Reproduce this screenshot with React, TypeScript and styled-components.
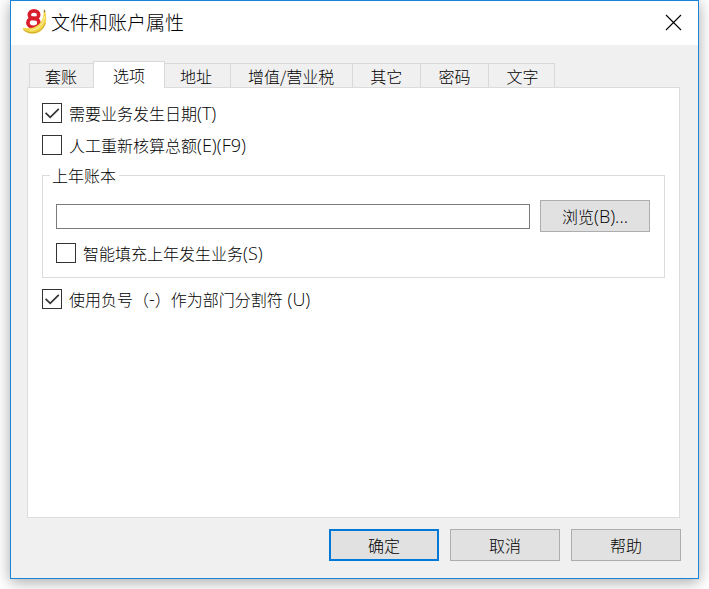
import React, { useState } from "react";
import styled, { createGlobalStyle } from "styled-components";

const GlobalStyle = createGlobalStyle`
  *, *::before, *::after { box-sizing: border-box; }
  body {
    margin: 0;
    background: #fff;
    color: #000;
    font: 300 16px/20px "Noto Sans CJK SC", "Noto Sans", sans-serif;
  }
  button, input { font: inherit; color: inherit; }
`;

const Dialog = styled.main`
  display: flex;
  flex-direction: column;
  min-height: calc(100vh - 10px);
  margin: 0 10px 10px;
  border: 1px solid #1883d7;
  background: #f0f0f0;
  box-shadow: 0 3px 14px rgba(0, 0, 0, 0.35);
`;

const TitleBar = styled.header`
  display: flex;
  align-items: center;
  gap: 4px;
  height: 44px;
  padding: 0 16px 2px 11px;
  background: #fff;
`;

const Title = styled.h1`
  flex: 1;
  margin: 0;
  font-size: 19px;
  font-weight: 300;
  line-height: 24px;
`;

const CloseButton = styled.button`
  display: flex;
  padding: 0;
  border: 0;
  background: none;
`;

const Content = styled.div`
  display: flex;
  flex: 1;
  flex-direction: column;
  padding: 16px 18px 0 16px;
`;

const TabList = styled.div`
  display: flex;
  align-items: flex-end;
  padding-left: 2px;
`;

const Tab = styled.button<{ $selected: boolean }>`
  height: ${(p) => (p.$selected ? 27 : 24)}px;
  margin: ${(p) => (p.$selected ? "0 -2px -1px" : "0")};
  padding: ${(p) => (p.$selected ? "0 19px" : "1px 18px 0 17px")};
  border: solid #d9d9d9;
  border-width: ${(p) => (p.$selected ? "1px 1px 0" : "1px 1px 0 0")};
  background: ${(p) => (p.$selected ? "#fff" : "#f0f0f0")};
  white-space: nowrap;
  z-index: ${(p) => (p.$selected ? 1 : 0)};

  &:first-child {
    margin-left: 0;
    padding-right: 17px;
    padding-left: 15px;
    border-left-width: 1px;
  }

  &:last-child {
    padding-right: 16px;
  }
`;

const Panel = styled.section`
  flex: 1;
  padding: 15px 14px;
  border: 1px solid #dcdcdc;
  background: #fff;
`;

const CheckLabel = styled.label`
  display: flex;
  align-items: center;
  gap: 7px;

  & + & {
    margin-top: 12px;
  }
`;

const CheckBox = styled.span`
  display: grid;
  flex: none;

  & > * {
    grid-area: 1 / 1;
    width: 20px;
    height: 20px;
  }

  input {
    appearance: none;
    margin: 0;
    border: 1px solid #333;
    background: #fff;
  }

  svg {
    visibility: hidden;
    pointer-events: none;
  }

  input:checked + svg {
    visibility: visible;
  }
`;

const Latin = styled.span`
  font-family: "Open Sans", sans-serif;
  font-size: 18px;
  font-weight: 300;
  line-height: 0;
`;

const Group = styled.fieldset`
  min-width: 0;
  margin: 11px 0;
  padding: 15px 0 14px;
  border: 1px solid #dcdcdc;
`;

const GroupTitle = styled.legend`
  margin-left: 7px;
  padding: 0 3px 0 2px;
  line-height: 18px;
`;

const GroupBody = styled.div`
  display: flex;
  flex-direction: column;
  gap: 11px;
  padding: 1px 14px 0 13px;
`;

const FileRow = styled.div`
  display: flex;
  align-items: center;
  gap: 10px;
`;

const PathInput = styled.input`
  flex: 1;
  min-width: 0;
  height: 25px;
  padding: 0 4px;
  border: 1px solid #7a7a7a;
  background: #fff;
`;

const PushButton = styled.button<{ $primary?: boolean }>`
  width: 110px;
  height: 32px;
  padding: 0;
  border: ${(p) => (p.$primary ? "2px solid #0078d7" : "1px solid #adadad")};
  background: #e1e1e1;
`;

const Footer = styled.footer`
  display: flex;
  justify-content: flex-end;
  gap: 11px;
  padding: 11px 17px 17px;
`;

function Logo() {
  return (
    <svg width="25" height="26" viewBox="0 0 25 26" aria-hidden="true">
      <g fill="none" stroke="#d81e2c" strokeWidth="3.7">
        <ellipse cx="12" cy="5.8" rx="4.7" ry="3.9" />
        <ellipse cx="11.4" cy="13.7" rx="5.5" ry="4.6" />
      </g>
      <path
        d="M21.6 1.2L23 .8C23.2 3 24.4 6 24.2 10.5C23.8 18.5 18.5 24.8 10.5 24.8C6.5 24.8 3 23 .8 20.3L1.2 18.8C9 20.5 18 17.5 20.6 9.5C21.6 6.5 22 4 21.6 1.2Z"
        fill="#f1d549"
      />
      <path d="M22.4 7C22 14.5 16.5 20.5 8 21.2" fill="none" stroke="#f9ea8c" strokeWidth="1.4" />
      <path d="M1.5 20.8C8 26 20 24.5 23.4 14" fill="none" stroke="#cfa52c" strokeWidth="1" />
      <path d="M21.8 1L23 .7L23.3 3.2L22 3.6Z" fill="#8c8445" />
    </svg>
  );
}

function Check({ checked, children }: { checked?: boolean; children: React.ReactNode }) {
  return (
    <CheckLabel>
      <CheckBox>
        <input type="checkbox" defaultChecked={checked} />
        <svg viewBox="0 0 20 20" aria-hidden="true">
          <path d="M3.6 9.8L8.2 14.4L16.8 5.8" fill="none" stroke="#333" strokeWidth="1.7" />
        </svg>
      </CheckBox>
      <span>{children}</span>
    </CheckLabel>
  );
}

const tabs = ["套账", "选项", "地址", "增值/营业税", "其它", "密码", "文字"];

export default function App() {
  const [selected, setSelected] = useState("选项");

  return (
    <>
      <GlobalStyle />
      <Dialog lang="zh-CN">
        <TitleBar>
          <Logo />
          <Title>文件和账户属性</Title>
          <CloseButton type="button" aria-label="关闭">
            <svg width="17" height="17" viewBox="0 0 17 17" aria-hidden="true">
              <path d="M1 1L16 16M16 1L1 16" stroke="#000" strokeWidth="1.1" />
            </svg>
          </CloseButton>
        </TitleBar>
        <Content>
          <TabList role="tablist">
            {tabs.map((name) => (
              <Tab
                key={name}
                type="button"
                role="tab"
                aria-selected={name === selected}
                $selected={name === selected}
                onClick={() => setSelected(name)}
              >
                {name}
              </Tab>
            ))}
          </TabList>
          <Panel role="tabpanel" aria-label={selected}>
            {selected === "选项" && (
              <>
                <Check checked>
                  需要业务发生日期<Latin>(T)</Latin>
                </Check>
                <Check>
                  人工重新核算总额<Latin>(E)(F9)</Latin>
                </Check>
                <Group>
                  <GroupTitle>上年账本</GroupTitle>
                  <GroupBody>
                    <FileRow>
                      <PathInput type="text" aria-label="上年账本" />
                      <PushButton type="button">
                        浏览<Latin>(B)...</Latin>
                      </PushButton>
                    </FileRow>
                    <Check>
                      智能填充上年发生业务<Latin>(S)</Latin>
                    </Check>
                  </GroupBody>
                </Group>
                <Check checked>
                  使用负号（<Latin>-</Latin>）作为部门分割符<Latin> (U)</Latin>
                </Check>
              </>
            )}
          </Panel>
        </Content>
        <Footer>
          <PushButton type="submit" $primary>确定</PushButton>
          <PushButton type="button">取消</PushButton>
          <PushButton type="button">帮助</PushButton>
        </Footer>
      </Dialog>
    </>
  );
}
